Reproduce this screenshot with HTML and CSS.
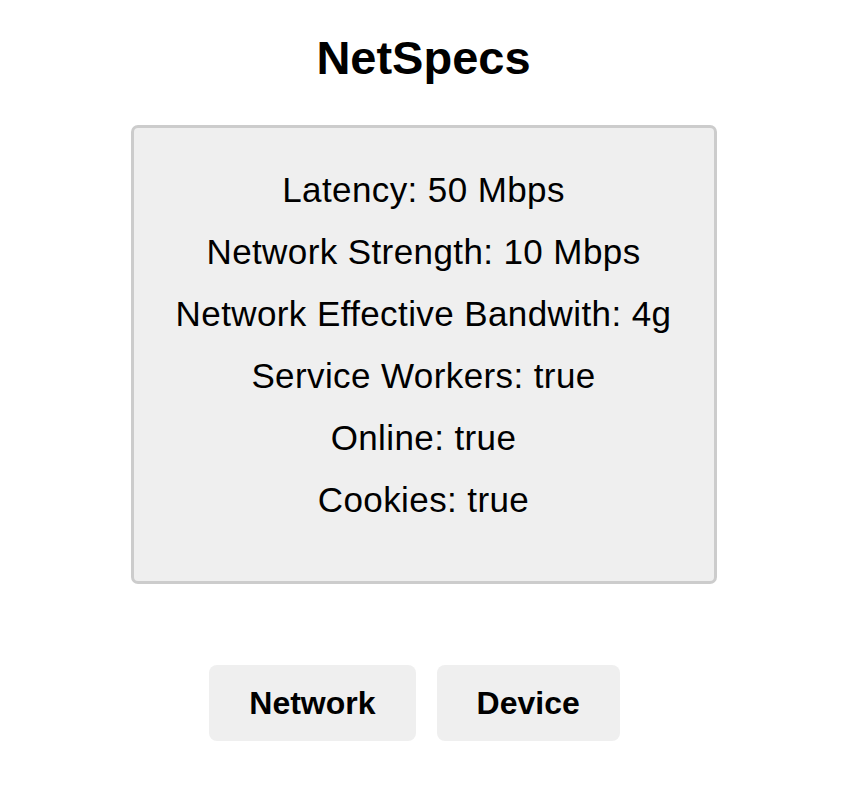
FILE: index.html
```html
<!DOCTYPE html>
<html>
<head>
<meta charset="utf-8">
<link rel="stylesheet" href="styles.css">
</head>
<body>
<div class="page">
  <h1 class="title">NetSpecs</h1>
  <div class="card">
    <p class="row">Latency: 50 Mbps</p>
    <p class="row">Network Strength: 10 Mbps</p>
    <p class="row">Network Effective Bandwith: 4g</p>
    <p class="row">Service Workers: true</p>
    <p class="row">Online: true</p>
    <p class="row">Cookies: true</p>
  </div>
  <div class="actions">
    <button class="btn btn-network">Network</button>
    <button class="btn btn-device">Device</button>
  </div>
</div>
</body>
</html>
```

FILE: styles.css
```css
html, body {
  margin: 0;
  padding: 0;
  background: #ffffff;
}
body {
  font-family: "Liberation Sans", Arial, Helvetica, sans-serif;
  color: #000;
}
.page {
  width: 847px;
  display: flex;
  flex-direction: column;
  align-items: center;
}
.title {
  margin: 30px 0 0 0;
  font-size: 47px;
  line-height: 56px;
  font-weight: bold;
}
.card {
  margin-top: 39px;
  width: 586px;
  height: 459px;
  box-sizing: border-box;
  border: 3px solid #cccccc;
  border-radius: 7px;
  background: #efefef;
  padding-top: 31px;
  display: flex;
  flex-direction: column;
  align-items: center;
}
.row {
  margin: 0;
  font-size: 35px;
  letter-spacing: 0.4px;
  line-height: 62px;
}
.actions {
  margin-top: 81px;
  display: flex;
  gap: 21px;
  margin-left: -18px;
}
.btn {
  font-family: "Liberation Sans", Arial, Helvetica, sans-serif;
  font-weight: bold;
  font-size: 32px;
  height: 76px;
  padding: 0 40px;
  border: none;
  border-radius: 8px;
  background: #efefef;
  color: #000;
}
```
